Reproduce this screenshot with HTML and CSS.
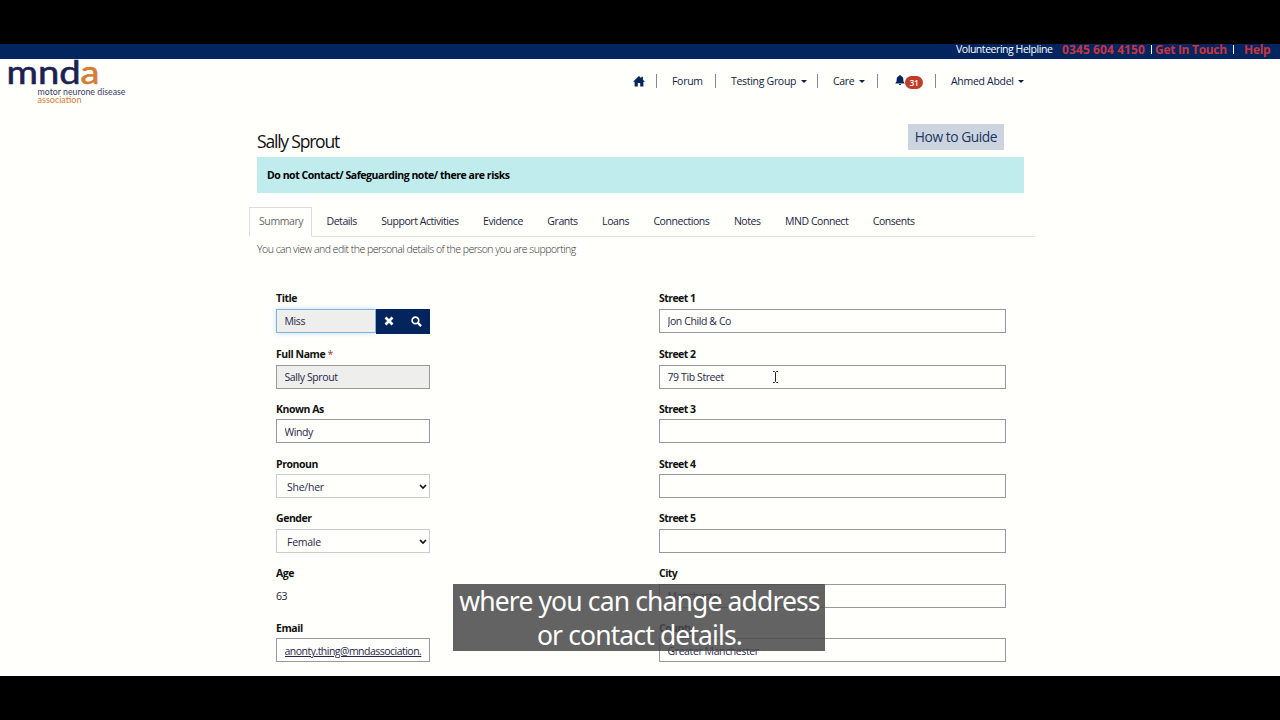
FILE: index.html
```
<!DOCTYPE html>
<html lang="en">
<head>
    <meta charset="UTF-8">
    <meta name="viewport" content="width=device-width, initial-scale=1.0">
    <title>Sally Sprout - MND Association</title>
    <link rel="stylesheet" href="styles.css">
</head>
<body>
    <div class="screen">
        <!-- Helpline bar -->
        <div class="top-bar">
            <span class="helpline">Volunteering Helpline</span>
            <a class="phone">0345 604 4150</a>
            <span class="bar"></span>
            <a class="touch">Get In Touch</a>
            <span class="bar"></span>
            <a class="help">Help</a>
        </div>

        <!-- Logo and main menu -->
        <header class="header">
            <svg class="logo" width="130" height="48" viewBox="0 0 130 48">
                <text class="logo-name" x="6.500" y="24.500" textLength="93" lengthAdjust="spacingAndGlyphs">mnd<tspan class="orange">a</tspan></text>
                <text class="logo-sub" x="37.500" y="36" textLength="88" lengthAdjust="spacingAndGlyphs">motor neurone disease</text>
                <text class="logo-sub orange" x="37.500" y="44" textLength="44" lengthAdjust="spacingAndGlyphs">association</text>
            </svg>
            <nav class="menu">
                <a class="item home">
                    <svg width="12" height="11" viewBox="0 0 12 11"><path d="M6 0 0 5.700h1.600V10.500h3.200V7h2.400v3.500h3.200V5.700H12L9.900 3.700V.8H8.300v1.400z"/></svg>
                </a>
                <a class="item forum">Forum</a>
                <a class="item group">Testing Group<i class="caret"></i></a>
                <a class="item care">Care<i class="caret"></i></a>
                <a class="item bell">
                    <svg width="10" height="11" viewBox="0 0 10 11"><path d="M5 0c.6 0 .9.400.9.900C7.700 1.400 8.300 2.700 8.300 4.500c0 2 .4 2.800 1.500 3.900H.2C1.300 7.300 1.700 6.500 1.700 4.500c0-1.800.6-3.100 2.400-3.600C4.100.4 4.400 0 5 0zM3.900 9h2.200c0 1.500-2.200 1.500-2.200 0z"/></svg>
                    <span class="badge">31</span>
                </a>
                <a class="item user">Ahmed Abdel<i class="caret"></i></a>
            </nav>
        </header>

        <main class="content">
            <div class="title-row">
                <h1>Sally Sprout</h1>
                <a class="guide">How to Guide</a>
            </div>
            <div class="alert">Do not Contact/ Safeguarding note/ there are risks</div>

            <div class="tabs">
                <a class="tab active">Summary</a>
                <a class="tab">Details</a>
                <a class="tab">Support Activities</a>
                <a class="tab">Evidence</a>
                <a class="tab">Grants</a>
                <a class="tab">Loans</a>
                <a class="tab">Connections</a>
                <a class="tab">Notes</a>
                <a class="tab">MND Connect</a>
                <a class="tab">Consents</a>
            </div>
            <p class="intro">You can view and edit the personal details of the person you are supporting</p>

            <form class="form">
                <div class="column">
                    <div class="field first">
                        <label>Title</label>
                        <div class="lookup">
                            <input type="text" class="focused" value="Miss" readonly>
                            <button type="button"><svg width="10" height="10" viewBox="0 0 10 10"><path d="M1.500 1.500l7 7M8.500 1.500l-7 7" stroke="#fff" stroke-width="2.700"/></svg></button>
                            <button type="button"><svg width="11" height="11" viewBox="0 0 11 11"><circle cx="4.400" cy="4.400" r="3.300" fill="none" stroke="#fff" stroke-width="1.700"/><path d="M6.900 6.900l3.200 3.200" stroke="#fff" stroke-width="2.200"/></svg></button>
                        </div>
                    </div>
                    <div class="field">
                        <label>Full Name <span class="required">*</span></label>
                        <input type="text" value="Sally Sprout" readonly>
                    </div>
                    <div class="field">
                        <label>Known As</label>
                        <input type="text" value="Windy">
                    </div>
                    <div class="field">
                        <label>Pronoun</label>
                        <select><option>She/her</option></select>
                    </div>
                    <div class="field">
                        <label>Gender</label>
                        <select><option>Female</option></select>
                    </div>
                    <div class="field">
                        <label>Age</label>
                        <span class="plain">63</span>
                    </div>
                    <div class="field">
                        <label>Email</label>
                        <input type="text" class="email" value="anonty.thing@mndassociation.">
                    </div>
                </div>

                <div class="column address">
                    <div class="field first">
                        <label>Street 1</label>
                        <input type="text" value="Jon Child &amp; Co">
                    </div>
                    <div class="field">
                        <label>Street 2</label>
                        <input type="text" value="79 Tib Street">
                    </div>
                    <div class="field">
                        <label>Street 3</label>
                        <input type="text">
                    </div>
                    <div class="field">
                        <label>Street 4</label>
                        <input type="text">
                    </div>
                    <div class="field">
                        <label>Street 5</label>
                        <input type="text">
                    </div>
                    <div class="field">
                        <label>City</label>
                        <input type="text" value="Manchester">
                    </div>
                    <div class="field">
                        <label>County</label>
                        <input type="text" value="Greater Manchester">
                    </div>
                </div>
            </form>
        </main>

        <!-- Overlays -->
        <svg class="cursor" width="7" height="12" viewBox="0 0 7 12"><path d="M1 .5h1.500l1 1 1-1H6M3.500 1.500v9M1 11.500h1.500l1-1 1 1H6" fill="none" stroke="#222"/></svg>
        <div class="caption">
            <div class="line">where you can change address</div>
            <div class="line">or contact details.</div>
        </div>
    </div>
</body>
</html>
```
FILE: styles.css
```
* {
    box-sizing: border-box;
}
body {
    margin: 0;
    padding: 44px 0;
    height: 720px;
    background-color: #000;
    font-family: "Open Sans", "Noto Sans", sans-serif;
    font-size: 10.5px;
    letter-spacing: -0.45px;
    color: #1c2340;
    overflow: hidden;
}
.screen {
    position: relative;
    height: 632px;
    background-color: #fffffc;
    overflow: hidden;
}
.top-bar {
    display: flex;
    justify-content: flex-end;
    height: 15px;
    padding-right: 9px;
    background-color: #03255f;
    line-height: 12px;
    white-space: nowrap;
}
.helpline {
    color: #fff;
    line-height: 10px;
    width: 97px;
    margin-right: 9px;
}
.top-bar a {
    color: #c9353f;
    font-size: 12px;
    font-weight: 700;
    letter-spacing: -0.3px;
}
.top-bar .phone {
    width: 84px;
    letter-spacing: 0.1px;
}
.touch {
    width: 72px;
}
.help {
    width: 27px;
}
.bar {
    width: 1px;
    height: 9px;
    margin: 1px 3px 0 5px;
    background-color: #fff;
}
.touch + .bar {
    margin: 1px 10px 0 6px;
}
.header {
    display: flex;
    justify-content: space-between;
    height: 57px;
    padding-right: 257px;
}
.logo {
    letter-spacing: 0;
}
.logo-name {
    font-family: Lato, sans-serif;
    font-size: 33px;
    fill: #1b2152;
    stroke: #1b2152;
    stroke-width: 0.6px;
}
.logo-sub {
    font-family: Lato, sans-serif;
    font-size: 9px;
    fill: #3a3d68;
}
.logo .orange {
    fill: #d67c35;
}
.logo-name .orange {
    stroke: #d67c35;
}
.menu {
    display: flex;
    padding-top: 15px;
    color: #0f2142;
}
.item {
    display: flex;
    align-items: center;
    height: 14px;
    padding: 0 15px;
    border-left: 1px solid #888;
    letter-spacing: -0.3px;
    white-space: nowrap;
}
.item svg {
    fill: #03245c;
}
.home {
    width: 38px;
    padding: 0 0 0 15px;
    border-left: none;
}
.forum {
    width: 59px;
}
.group {
    width: 102px;
}
.care {
    width: 60px;
}
.bell {
    width: 58px;
    padding: 0 0 0 17px;
}
.bell svg {
    margin-top: -2px;
}
.user {
    width: 88px;
    padding-right: 0;
}
.caret {
    margin-left: 5px;
    border: 3px solid transparent;
    border-top: 3px solid #0f2142;
    border-bottom: none;
}
.user .caret {
    margin-left: 4px;
}
.badge {
    width: 18px;
    height: 13px;
    margin-top: 2px;
    border-radius: 7px;
    background-color: #c23a28;
    color: #fff;
    font-size: 8.5px;
    line-height: 13px;
    font-weight: 600;
    text-align: center;
}
.content {
    width: 786px;
    margin-left: 249px;
}
.title-row {
    display: flex;
    justify-content: space-between;
    height: 41px;
    padding: 8px 31px 0 8px;
}
h1 {
    margin: 5px 0 0;
    font-size: 17.5px;
    line-height: 24px;
    font-weight: 400;
    letter-spacing: -1.2px;
    color: #111;
}
.guide {
    width: 96px;
    height: 26px;
    background-color: #ccd4df;
    color: #1b3560;
    font-size: 13.8px;
    line-height: 26px;
    text-align: center;
}
.alert {
    height: 36px;
    margin: 0 11px 0 8px;
    padding-left: 10px;
    background-color: #c0eced;
    color: #000;
    font-weight: 700;
    line-height: 36px;
}
.tabs {
    display: flex;
    height: 30px;
    margin-top: 14px;
    border-bottom: 1px solid #e2e2e0;
}
.tab {
    height: 30px;
    padding: 0 10px;
    margin-right: 4.5px;
    line-height: 28px;
    white-space: nowrap;
}
.tab.active {
    width: 63px;
    padding-left: 9px;
    letter-spacing: -0.4px;
    border: 1px solid #ddd;
    border-bottom-color: #fffffc;
    line-height: 26px;
    color: #666;
}
.intro {
    margin: 4px 0 0 8px;
    height: 16px;
    line-height: 16px;
    font-weight: 300;
    letter-spacing: -0.5px;
    color: #333;
}
.form {
    display: flex;
    gap: 229px;
    padding: 33px 0 0 27px;
}
.column {
    width: 154px;
}
.address {
    width: 347px;
}
.field {
    height: 54.75px;
}
.field.first {
    height: 56px;
}
.field label {
    display: block;
    height: 18.5px;
    line-height: 17px;
    font-weight: 700;
    color: #111;
}
.address label {
    letter-spacing: -0.55px;
}
.required {
    color: #a03040;
    font-weight: 400;
}
input, select {
    display: block;
    width: 100%;
    height: 24px;
    padding: 1px 7.5px 0;
    border: 1px solid #999;
    border-radius: 0;
    background-color: #fffffc;
    font: inherit;
    color: #26264a;
    letter-spacing: -0.4px;
    outline: none;
}
input[readonly] {
    background-color: #eeeeec;
}
select {
    appearance: none;
    padding: 2px 0 0 10px;
    border-color: #ccc;
    letter-spacing: -0.25px;
    background-image: url("data:image/svg+xml,%3Csvg xmlns='http://www.w3.org/2000/svg' width='8' height='6'%3E%3Cpath d='M1 1l3 3 3-3' fill='none' stroke='%23112' stroke-width='1.600'/%3E%3C/svg%3E");
    background-repeat: no-repeat;
    background-position: right 2px top 9px;
}
.lookup {
    display: flex;
}
.lookup .focused {
    flex: 1;
    min-width: 0;
    border-color: #85b3d8;
    box-shadow: 0 0 5px #b9dcf3;
}
.lookup button {
    display: flex;
    align-items: center;
    justify-content: center;
    width: 27px;
    height: 25px;
    padding: 0 1px 0 0;
    border: none;
    background-color: #03245c;
}
.email {
    letter-spacing: -0.52px;
    text-decoration: underline;
}
.plain {
    display: block;
    line-height: 25px;
}
.cursor {
    position: absolute;
    left: 772px;
    top: 327px;
}
.caption {
    position: absolute;
    left: 453px;
    top: 540px;
    width: 372px;
    height: 67px;
    background-color: rgba(72, 72, 72, 0.85);
    color: #fff;
    font-family: "Noto Sans", "Open Sans", sans-serif;
    font-size: 26.5px;
    letter-spacing: -0.87px;
    text-align: center;
    white-space: nowrap;
}
.line {
    height: 34px;
    line-height: 34px;
    padding-left: 1px;
}
```
